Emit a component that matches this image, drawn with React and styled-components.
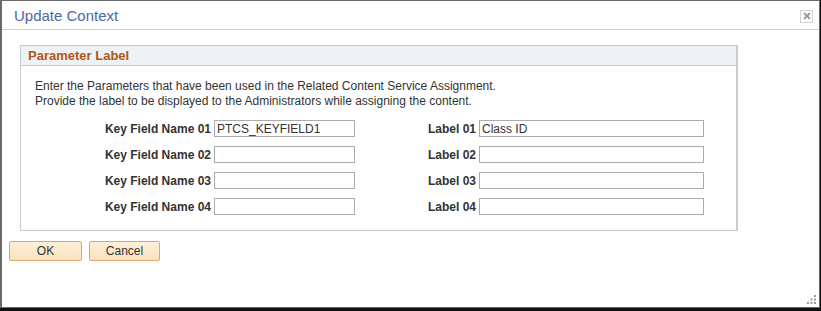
import React from "react";
import styled, { createGlobalStyle } from "styled-components";

const GlobalStyle = createGlobalStyle`
  html, body {
    margin: 0;
    padding: 0;
    background: #111;
  }
  body {
    font-family: "Liberation Sans", Arial, sans-serif;
    font-size: 12px;
    color: #333;
  }
`;

const Dialog = styled.div`
  position: relative;
  box-sizing: border-box;
  width: 820px;
  height: 308px;
  background: #fff;
  border: 1px solid #6a6a6a;
  border-left-width: 2px;
  display: flex;
  flex-direction: column;
`;

const Header = styled.div`
  height: 28px;
  border-bottom: 1px solid #cfcfcf;
  display: flex;
  align-items: center;
  justify-content: space-between;
  padding: 0 6px 0 12px;
`;

const Title = styled.div`
  font-size: 15px;
  color: #4a69a3;
`;

const CloseBox = styled.div`
  width: 11px;
  height: 11px;
  border: 1px solid #d2d2d2;
  display: flex;
  align-items: center;
  justify-content: center;
  margin-top: 2px;
`;

const Body = styled.div`
  padding: 15px 0 0 18px;
`;

const Group = styled.div`
  width: 718px;
  box-sizing: border-box;
  border: 1px solid #c8ccd1;
  border-right-width: 2px;
`;

const GroupHeader = styled.div`
  height: 19px;
  background: #eef2f4;
  border-bottom: 1px solid #c8ccd1;
  display: flex;
  align-items: center;
  padding-left: 7px;
  font-size: 13px;
  font-weight: bold;
  color: #b1561c;
`;

const GroupBody = styled.div`
  padding: 13px 0 15px 0;
`;

const Intro = styled.p`
  margin: 0 0 11px 14px;
  line-height: 15px;
`;

const Form = styled.div`
  display: grid;
  grid-template-columns: 190px 141px 118px 225px;
  column-gap: 3px;
  row-gap: 9px;
  align-items: center;
`;

const Label = styled.label`
  font-weight: bold;
  text-align: right;
  white-space: nowrap;
`;

const Field = styled.input`
  box-sizing: border-box;
  height: 17px;
  width: 100%;
  margin: 0;
  padding: 0 2px;
  border: 1px solid #ababab;
  font-family: "Liberation Sans", Arial, sans-serif;
  font-size: 12px;
  color: #333;
  outline: none;
`;

const Buttons = styled.div`
  display: flex;
  gap: 7px;
  padding: 10px 0 0 7px;
`;

const Button = styled.button`
  box-sizing: border-box;
  width: ${p => p.w}px;
  height: 20px;
  padding: 0;
  border: 1px solid #dca66e;
  border-radius: 2px;
  background: linear-gradient(#fdefd9, #fbe2bd);
  font-family: "Liberation Sans", Arial, sans-serif;
  font-size: 12px;
  color: #333;
`;

const Grip = styled.svg`
  position: absolute;
  right: 2px;
  bottom: 2px;
`;

const rows = [
  { key: "PTCS_KEYFIELD1", label: "Class ID" },
  { key: "", label: "" },
  { key: "", label: "" },
  { key: "", label: "" },
];

const App = () => (
  <>
    <GlobalStyle />
    <Dialog>
      <Header>
        <Title>Update Context</Title>
        <CloseBox>
          <svg width="8" height="8" viewBox="0 0 8 8">
            <path d="M1 1L7 7M7 1L1 7" stroke="#9a9a9a" strokeWidth="1.8" />
          </svg>
        </CloseBox>
      </Header>
      <Body>
        <Group>
          <GroupHeader>Parameter Label</GroupHeader>
          <GroupBody>
            <Intro>
              Enter the Parameters that have been used in the Related Content Service Assignment.
              <br />
              Provide the label to be displayed to the Administrators while assigning the content.
            </Intro>
            <Form>
              {rows.map((r, i) => (
                <React.Fragment key={i}>
                  <Label>Key Field Name 0{i + 1}</Label>
                  <Field defaultValue={r.key} />
                  <Label>Label 0{i + 1}</Label>
                  <Field defaultValue={r.label} />
                </React.Fragment>
              ))}
            </Form>
          </GroupBody>
        </Group>
      </Body>
      <Buttons>
        <Button w={73}>OK</Button>
        <Button w={71}>Cancel</Button>
      </Buttons>
      <Grip width="10" height="10" viewBox="0 0 10 10">
        <g fill="#9a9a9a">
          <rect x="7" y="0" width="2" height="2" />
          <rect x="3.5" y="3.5" width="2" height="2" />
          <rect x="7" y="3.5" width="2" height="2" />
          <rect x="0" y="7" width="2" height="2" />
          <rect x="3.5" y="7" width="2" height="2" />
          <rect x="7" y="7" width="2" height="2" />
        </g>
      </Grip>
    </Dialog>
  </>
);

export default App;
